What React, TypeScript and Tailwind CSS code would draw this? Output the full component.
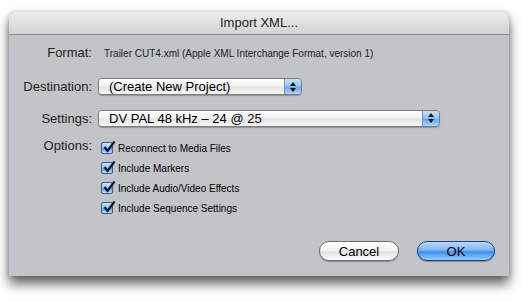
import React from "react";

const font = { fontFamily: '"Liberation Sans", Arial, sans-serif' };

function PopupArrows() {
  return (
    <svg width="8" height="12" viewBox="0 0 8 12">
      <path d="M4 1 L7 5 L1 5 Z" fill="#111" />
      <path d="M4 11 L7 7 L1 7 Z" fill="#111" />
    </svg>
  );
}

function Popup({ label, width }: { label: string; width: string }) {
  return (
    <div
      className={`flex h-[17px] ${width} rounded-[4px] border border-[#7c7c7c] overflow-hidden shadow-[0_1px_1px_rgba(0,0,0,0.25)]`}
    >
      <div className="flex-1 flex items-center pl-[10px] text-[13px] text-black bg-[linear-gradient(#ffffff,#f3f3f3_45%,#e4e4e4_55%,#f5f5f5)]">
        {label}
      </div>
      <div className="w-[17px] flex items-center justify-center border-l border-[#6f8fbf] bg-[linear-gradient(#c6e0fb,#9ac6f4_45%,#6aaaf0_55%,#a9d4fb)]">
        <PopupArrows />
      </div>
    </div>
  );
}

function Check({ label }: { label: string }) {
  return (
    <div className="flex items-center h-[20px]">
      <div className="relative w-[12px] h-[12px] rounded-[2px] border border-[#3b5a86] bg-[linear-gradient(#cfe6fd,#8ec2f5_50%,#5fa6ee_55%,#b7dcfd)]">
        <svg className="absolute left-[1px] top-[-3px]" width="13" height="13" viewBox="0 0 13 13">
          <path d="M1.5 7 L4.5 11 L11.5 1.5" fill="none" stroke="#0b1a33" strokeWidth="2.2" strokeLinejoin="round" />
        </svg>
      </div>
      <span className="ml-[5px] text-[10px] text-black">{label}</span>
    </div>
  );
}

export default function App() {
  return (
    <div className="w-[523px] h-[302px] bg-white overflow-hidden pt-[12px] pl-[9px]" style={font}>
      <div className="w-[500px] h-[264px] flex flex-col rounded-t-[6px] bg-[#c3c4c8] shadow-[0_8px_12px_rgba(0,0,0,0.6),0_0_5px_rgba(0,0,0,0.25)]">
        <div className="h-[23px] flex items-center justify-center rounded-t-[6px] border-b border-[#8a8a8a] bg-[linear-gradient(#ececec,#d3d3d3)] text-[13px] text-[#222]">
          Import XML...
        </div>
        <div className="flex flex-col pt-[11px]">
          <div className="flex items-center h-[14px]">
            <div className="w-[83px] text-right text-[13px] text-[#222]">Format:</div>
            <div className="ml-[12px] text-[10px] text-[#222]">
              Trailer CUT4.xml (Apple XML Interchange Format, version 1)
            </div>
          </div>
          <div className="flex items-center mt-[17px]">
            <div className="w-[83px] text-right text-[13px] text-[#222]">Destination:</div>
            <div className="ml-[6px]">
              <Popup label="(Create New Project)" width="w-[204px]" />
            </div>
          </div>
          <div className="flex items-center mt-[12px]">
            <div className="w-[83px] text-right text-[13px] text-[#222]">Settings:</div>
            <div className="ml-[6px]">
              <Popup label="DV PAL 48 kHz – 24 @ 25" width="w-[342px]" />
            </div>
          </div>
          <div className="flex mt-[10px]">
            <div className="w-[83px] text-right text-[13px] text-[#222] leading-[16px]">Options:</div>
            <div className="ml-[9px] flex flex-col">
              <Check label="Reconnect to Media Files" />
              <Check label="Include Markers" />
              <Check label="Include Audio/Video Effects" />
              <Check label="Include Sequence Settings" />
            </div>
          </div>
          <div className="flex justify-end gap-[18px] mt-[23px] pr-[14px]">
            <button className="w-[80px] h-[20px] rounded-full border border-[#6d6d6d] text-[13px] text-black bg-[linear-gradient(#ffffff,#f4f4f4_45%,#e2e2e2_55%,#fdfdfd)] shadow-[0_1px_1px_rgba(0,0,0,0.3)]">
              Cancel
            </button>
            <button className="w-[78px] h-[20px] rounded-full border border-[#1f3f86] text-[13px] text-black bg-[linear-gradient(#b9dafb,#7ab7f3_45%,#3f8ff0_55%,#8fd0ff)] shadow-[0_1px_1px_rgba(0,0,0,0.3)]">
              OK
            </button>
          </div>
        </div>
      </div>
    </div>
  );
}
